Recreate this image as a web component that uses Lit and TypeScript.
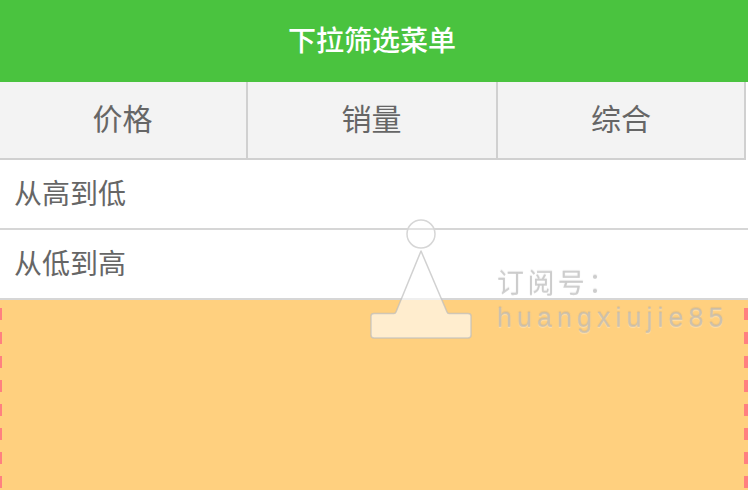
import { LitElement, html, css } from "lit";
import { customElement } from "lit/decorators.js";

@customElement("app-root")
export class AppRoot extends LitElement {
  static styles = css`
    :host {
      display: block;
      position: relative;
      width: 748px;
      height: 490px;
      overflow: hidden;
      background: #fff;
      font-family: "Liberation Sans", "Noto Sans CJK SC", sans-serif;
      color: #666;
    }
    .page { display: flex; flex-direction: column; height: 100%; }
    .header {
      box-sizing: border-box;
      height: 82px;
      padding: 0 4px 4px 0;
      background: #4ac33f;
      color: #fff;
      font-size: 28px;
      font-weight: 500;
      display: flex;
      align-items: center;
      justify-content: center;
      flex: none;
    }
    .tabs { display: flex; width: 746px; height: 78px; flex: none; }
    .tab {
      box-sizing: border-box;
      background: #f3f3f3;
      border-right: 2px solid #d0d0d0;
      border-bottom: 2px solid #d0d0d0;
      font-size: 30px;
      padding: 0 1px 7px 0;
      display: flex;
      align-items: center;
      justify-content: center;
    }
    .tab.a, .tab.c { width: 248px; }
    .tab.b { width: 250px; }
    .tab.c { padding-right: 0; }
    .row {
      box-sizing: border-box;
      height: 70px;
      flex: none;
      border-bottom: 2px solid #d6d6d6;
      font-size: 28px;
      padding: 0 0 4px 14px;
      display: flex;
      align-items: center;
    }
    .orange {
      flex: 1;
      background-color: #ffd07f;
      background-image:
        repeating-linear-gradient(to bottom, transparent 0 8px, #ff8080 8px 20px, transparent 20px 24px),
        repeating-linear-gradient(to bottom, transparent 0 8px, #ff8080 8px 20px, transparent 20px 24px);
      background-size: 2px 100%, 4px 100%;
      background-position: left top, right top;
      background-repeat: no-repeat;
    }
    .wm { position: absolute; pointer-events: none; }
    .logo { left: 360px; top: 210px; width: 120px; height: 135px; filter: blur(0.45px); }
    .wm-text {
      left: 497px;
      top: 266px;
      color: rgba(185, 185, 185, 0.6);
      text-shadow: 0 -1px 1px rgba(150, 150, 150, 0.22), 0 1px 1px rgba(255, 255, 255, 0.3);
      white-space: nowrap;
      filter: blur(0.3px);
    }
    .wm-1 { font-size: 27px; line-height: 36px; letter-spacing: 3.4px; }
    .wm-2 { font-size: 27px; line-height: 32px; letter-spacing: 5px; }
  `;

  render() {
    return html`
      <div class="page">
        <div class="header">下拉筛选菜单</div>
        <div class="tabs">
          <div class="tab a">价格</div>
          <div class="tab b">销量</div>
          <div class="tab c">综合</div>
        </div>
        <div class="row">从高到低</div>
        <div class="row">从低到高</div>
        <div class="orange"></div>
      </div>
      <svg class="wm logo" viewBox="0 0 120 135" fill="none">
        <circle cx="61" cy="24" r="14" fill="rgba(255,255,255,.3)" stroke="#d6d6d6" stroke-width="1.5"/>
        <path d="M61 41 L87 102 Q87.5 103.5 89 103.5 L108 103.500 Q111 103.5 111 106 L111 125 Q111 128 108 128 L14 128 Q11 128 11 125 L11 106 Q11 103.5 14 103.5 L34 103.5 Q35.500 103.5 36 102 Z"
          fill="rgba(255,255,255,.62)" stroke="rgba(190,190,190,.7)" stroke-width="1.5" stroke-linejoin="round"/>
      </svg>
      <div class="wm wm-text">
        <div class="wm-1">订阅号：</div>
        <div class="wm-2">huangxiujie85</div>
      </div>
    `;
  }
}
